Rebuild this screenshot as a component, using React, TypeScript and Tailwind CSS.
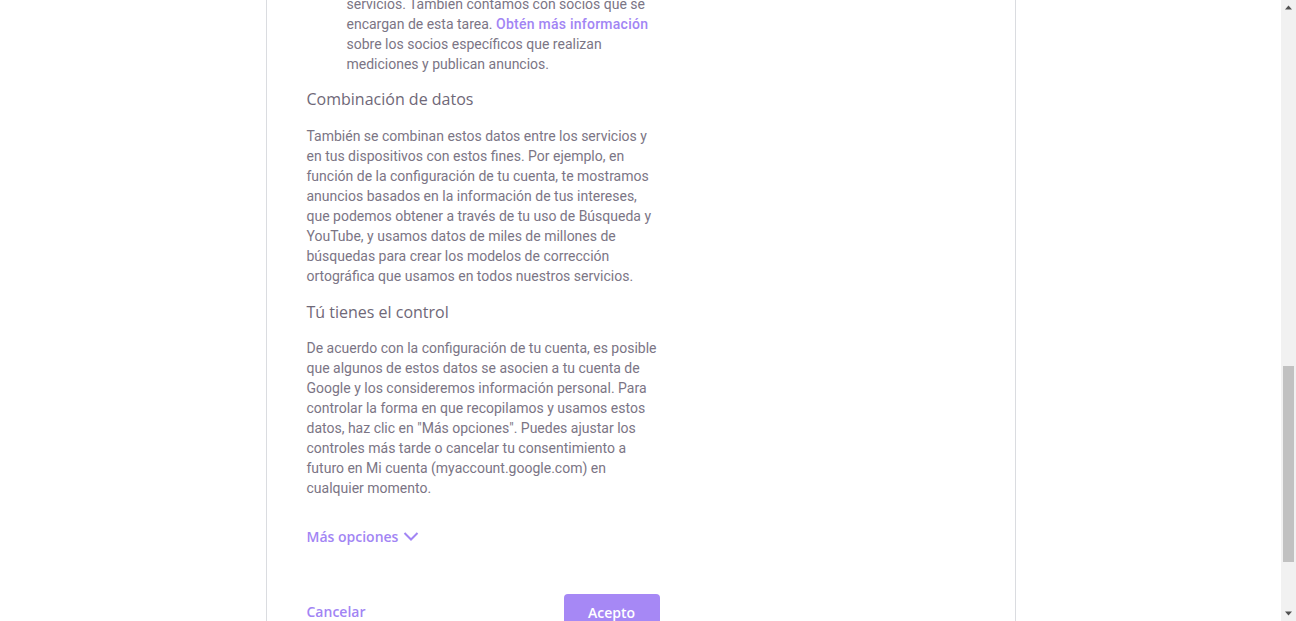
import React from "react";

const body = "text-[14px] leading-5 text-[#7b7585]";
const heading = "text-[16px] leading-6 font-normal text-[#6f6878] font-['Open_Sans',sans-serif]";
const action = "text-[14px] font-semibold font-['Open_Sans',sans-serif]";

const ChevronDown = () => (
  <svg width="18" height="18" viewBox="0 0 18 18" className="ml-1">
    <path d="M2.5 6l6.5 6.5L15.5 6" fill="none" stroke="currentColor" strokeWidth="2" />
  </svg>
);

const Scrollbar = () => (
  <div className="w-[15px] h-full bg-[#f1f1f1] flex flex-col items-center">
    <svg width="15" height="15" viewBox="0 0 15 15" className="shrink-0">
      <path d="M4 9.5h7L7.5 5.5z" fill="#505050" />
    </svg>
    <div className="flex-1 w-full px-[2px] flex flex-col">
      <div className="h-[351px]" />
      <div className="h-[196px] bg-[#c1c1c1]" />
    </div>
    <svg width="15" height="15" viewBox="0 0 15 15" className="shrink-0">
      <path d="M4 5.5h7L7.5 9.5z" fill="#505050" />
    </svg>
  </div>
);

export default function App() {
  return (
    <div className="h-[621px] w-[1296px] flex bg-white overflow-hidden" style={{ fontFamily: "Roboto, 'Liberation Sans', sans-serif" }}>
      <div className="flex-1 h-full overflow-hidden">
        <div className="mx-auto w-[750px] h-full border-x border-[#dadce0] px-10 flex flex-col">
          <div className="w-[353px] -mt-[6px]">
            <p className={`${body} pl-10`}>
              servicios. También contamos con socios que se encargan de esta tarea.{" "}
              <span className="font-medium tracking-[0.25px] text-[#a285f4]">Obtén más información</span> sobre los socios
              específicos que realizan mediciones y publican anuncios.
            </p>

            <h2 className={`${heading} mt-[13px]`}>Combinación de datos</h2>
            <p className={`${body} mt-[15px]`}>
              También se combinan estos datos entre los servicios y en tus dispositivos con estos fines. Por ejemplo, en
              función de la configuración de tu cuenta, te mostramos anuncios basados en la información de tus intereses,
              que podemos obtener a través de tu uso de Búsqueda y YouTube, y usamos datos de miles de millones de
              búsquedas para crear los modelos de corrección ortográfica que usamos en todos nuestros servicios.
            </p>

            <h2 className={`${heading} mt-[14px]`}>Tú tienes el control</h2>
            <p className={`${body} mt-[14px]`}>
              De acuerdo con la configuración de tu cuenta, es posible que algunos de estos datos se asocien a tu cuenta de
              Google y los consideremos información personal. Para controlar la forma en que recopilamos y usamos estos
              datos, haz clic en "Más opciones". Puedes ajustar los controles más tarde o cancelar tu consentimiento a
              futuro en Mi cuenta (myaccount.google.com) en cualquier momento.
            </p>

            <button className={`${action} mt-[28px] flex items-center h-5 text-[#a285f4]`}>
              Más opciones
              <ChevronDown />
            </button>

            <div className="mt-[48px] flex items-center justify-between">
              <button className={`${action} text-[#a285f4] h-9 flex items-center pb-[2px]`}>Cancelar</button>
              <button className={`${action} w-[96px] h-9 rounded bg-[#a688f5] text-white`}>Acepto</button>
            </div>
          </div>
        </div>
      </div>
      <Scrollbar />
    </div>
  );
}
